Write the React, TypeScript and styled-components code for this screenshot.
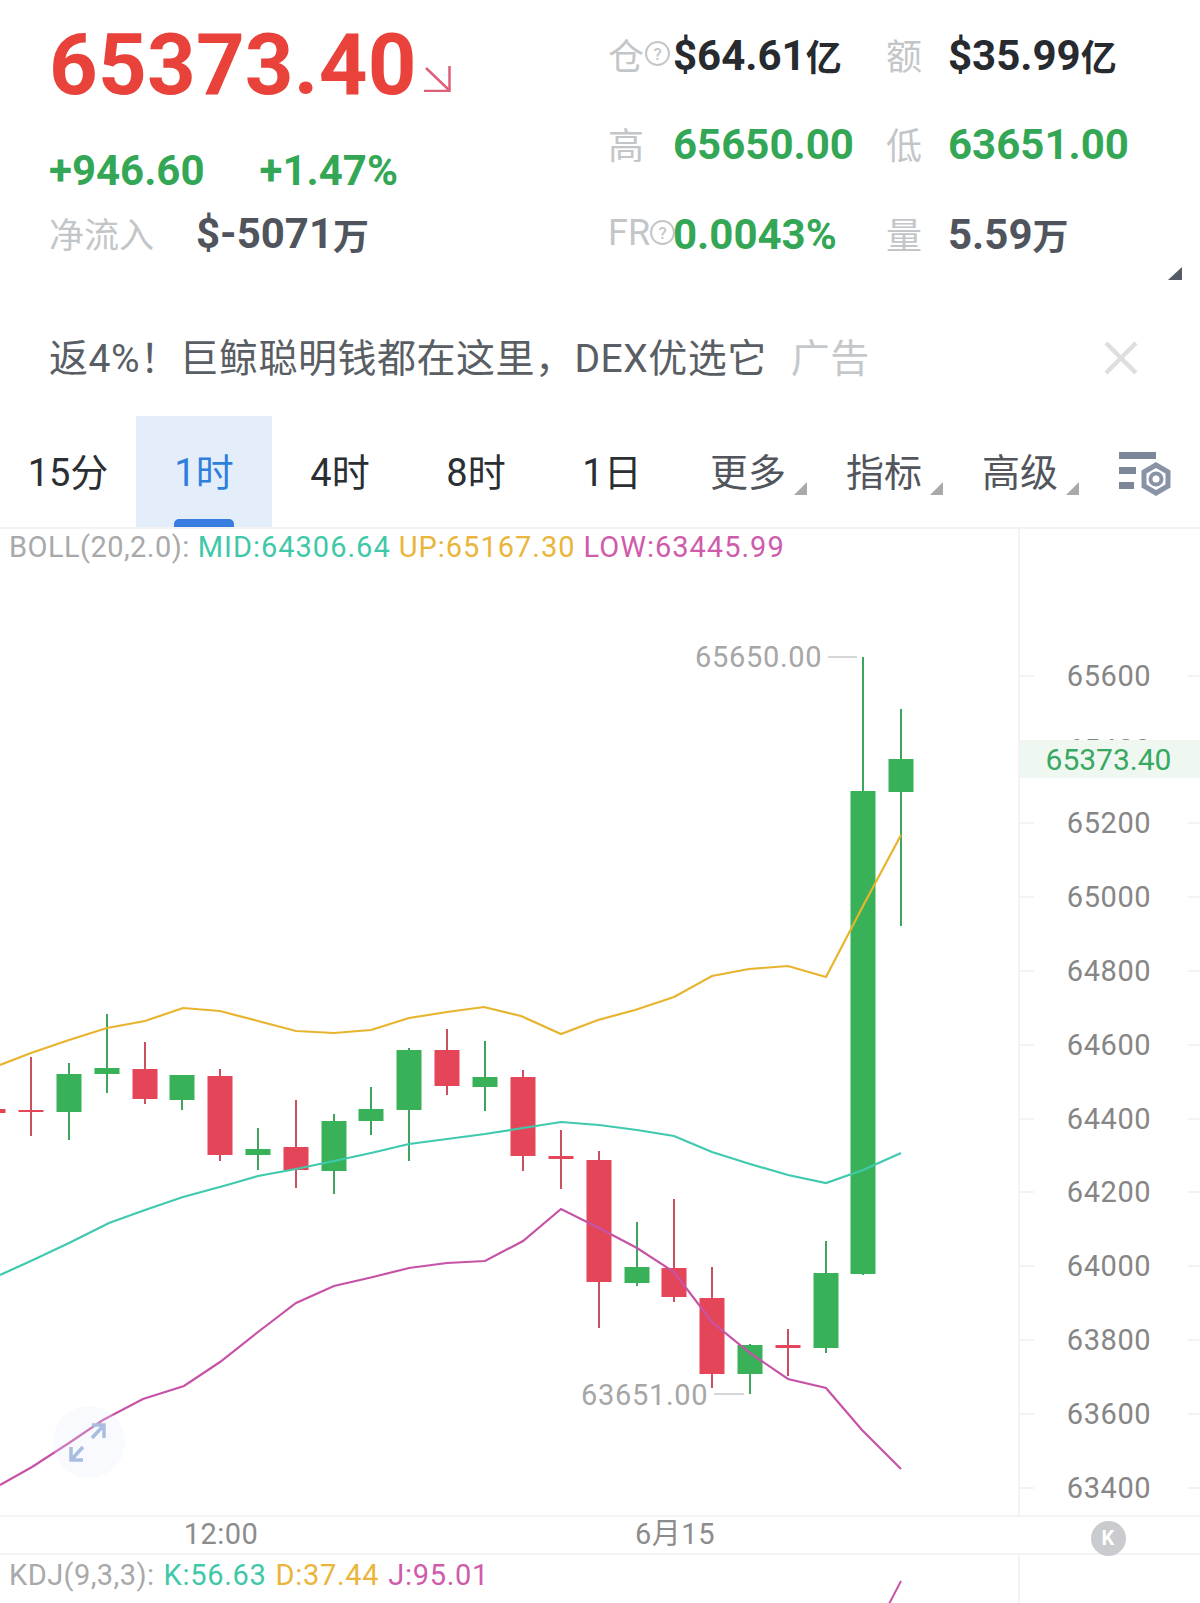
import React from 'react';
import styled, { createGlobalStyle } from 'styled-components';

const GlobalStyle = createGlobalStyle`
  html, body {
    margin: 0;
    padding: 0;
    background: #fff;
  }
  * {
    box-sizing: border-box;
  }
`;

const Page = styled.div`
  width: 1200px;
  height: 1603px;
  overflow: hidden;
  background: #fff;
  font-family: 'Roboto', 'Noto Sans CJK SC', sans-serif;
`;

const Summary = styled.div`
  display: grid;
  grid-template-columns: 608px 1fr;
  height: 310px;
  position: relative;
`;

const PriceColumn = styled.div`
  padding-left: 49px;
`;

const PriceRow = styled.div`
  display: flex;
  align-items: flex-end;
  height: 128px;
`;

const Price = styled.div`
  margin-bottom: -1px;
  font-size: 85px;
  line-height: 128px;
  font-weight: 700;
  color: #e8423a;
  letter-spacing: 0.2px;
`;

const PriceArrow = styled.svg`
  width: 27px;
  height: 26px;
  margin: 0 0 36px 7px;
`;

const ChangeRow = styled.div`
  display: flex;
  gap: 55px;
  height: 74px;
  padding-top: 14px;
  font-size: 42px;
  line-height: 58px;
  font-weight: 700;
  color: #33a755;
`;

const FlowRow = styled.div`
  display: flex;
  align-items: center;
  height: 60px;
`;

const FlowLabel = styled.span`
  width: 147px;
  font-size: 35px;
  color: #c3c6c9;
`;

const StatsGrid = styled.div`
  display: grid;
  grid-template-columns: 65px 213px 62px 1fr;
  grid-auto-rows: 89.5px;
  padding-top: 9px;
`;

const StatLabel = styled.div`
  display: flex;
  align-items: center;
  white-space: nowrap;
  font-size: 36px;
  color: #c3c6c9;
`;

const HelpDot = styled.span<{ $shift?: number }>`
  flex: none;
  display: inline-flex;
  align-items: center;
  justify-content: center;
  width: 25px;
  height: 25px;
  margin-left: ${(p) => p.$shift ?? 0}px;
  border: 2px solid #c3c6c9;
  border-radius: 50%;
  background: #fff;
  font-size: 17px;
  font-weight: 500;
  color: #c3c6c9;
`;

const StatValue = styled.div<{ $tone: 'green' | 'black' | 'slate' }>`
  display: flex;
  align-items: center;
  padding-top: 3px;
  white-space: nowrap;
  font-size: 42px;
  font-weight: 700;
  color: ${(p) => (p.$tone === 'green' ? '#33a755' : p.$tone === 'black' ? '#272a2e' : '#50545c')};
`;

const Unit = styled.span`
  font-size: 36px;
`;

const CornerMark = styled.span`
  position: absolute;
  left: 1168px;
  top: 267px;
  width: 14px;
  height: 13px;
  background: #555b65;
  clip-path: polygon(100% 0, 100% 100%, 0 100%);
`;

const AdRow = styled.div`
  display: flex;
  align-items: center;
  height: 106px;
  padding: 0 62px 16px 49px;
  font-size: 39px;
  letter-spacing: 0.5px;
  color: #595e64;
`;

const AdText = styled.span`
  white-space: nowrap;
`;

const AdTag = styled.span`
  margin-left: 24px;
  color: #c5c8cb;
`;

const AdClose = styled.svg`
  width: 34px;
  height: 34px;
  margin: 6px 0 0 auto;
`;

const TabBar = styled.div`
  display: grid;
  grid-template-columns: repeat(8, 136px) 1fr;
  height: 111px;
`;

const Tab = styled.div<{ $active?: boolean; $menu?: boolean }>`
  position: relative;
  display: flex;
  align-items: center;
  justify-content: center;
  padding-bottom: 5px;
  font-size: 38px;
  color: ${(p) => (p.$active ? '#2f7fdc' : p.$menu ? '#52565c' : '#2b2f33')};
  background: ${(p) => (p.$active ? '#e4eefb' : 'transparent')};

  ${(p) =>
    p.$active &&
    `&::before {
      content: '';
      position: absolute;
      left: 38px;
      bottom: 0;
      width: 60px;
      height: 8px;
      border-radius: 5px 5px 0 0;
      background: #3a7de0;
    }`}

  ${(p) =>
    p.$menu &&
    `&::after {
      content: '';
      position: absolute;
      left: 114px;
      top: 66px;
      width: 13px;
      height: 13px;
      background: #a9a9a9;
      clip-path: polygon(100% 0, 100% 100%, 0 100%);
    }`}
`;

const SettingsIcon = styled.svg`
  width: 56px;
  height: 48px;
  margin: 34px 0 0 29px;
`;

const ChartRow = styled.div`
  display: flex;
  height: 988px;
  border-top: 2px solid #f3f3f3;
`;

const Plot = styled.div`
  position: relative;
  flex: none;
  width: 1018px;
`;

const PlotSvg = styled.svg`
  display: block;
  position: absolute;
  left: 0;
  top: 0;
`;

const Legend = styled.div`
  position: absolute;
  left: 9px;
  top: -1px;
  display: flex;
  gap: 8px;
  white-space: nowrap;
  font-size: 29px;
  line-height: 38px;
  letter-spacing: 1px;
  font-weight: 400;
`;

const LegendItem = styled.span<{ $color: string }>`
  color: ${(p) => p.$color};
`;

const LegendName = styled.span`
  color: #a9a9a9;
  letter-spacing: 0.45px;
`;

const ExpandButton = styled.div`
  position: absolute;
  left: 53px;
  top: 877px;
  width: 72px;
  height: 72px;
  border-radius: 50%;
  display: flex;
  align-items: center;
  justify-content: center;
  background: rgba(226, 236, 250, 0.25);
`;

const Axis = styled.div`
  position: relative;
  flex: 1;
  padding-top: 110px;
  border-left: 2px solid #f3f3f3;
`;

const AxisRow = styled.div`
  display: flex;
  align-items: center;
  justify-content: space-between;
  height: 73.8px;
  font-size: 29px;
  letter-spacing: 0.6px;
  color: #868686;

  &::before,
  &::after {
    content: '';
    height: 2px;
    background: #f3f3f3;
  }
  &::before {
    width: 14px;
  }
  &::after {
    width: 12px;
    margin-left: 4px;
  }
`;

const PriceTag = styled.div`
  position: absolute;
  left: 0;
  right: 0;
  top: 211px;
  height: 38px;
  display: flex;
  align-items: center;
  justify-content: center;
  padding-right: 3px;
  background: #eff7f1;
  font-size: 30px;
  color: #38a862;
`;

const TimeAxis = styled.div`
  display: grid;
  grid-template-columns: 442px 466px 110px 182px;
  grid-template-rows: 36px;
  height: 40px;
  border-top: 2px solid #f3f3f3;
  border-bottom: 2px solid #f3f3f3;
  font-size: 29px;
  line-height: 1;
  letter-spacing: 0.5px;
  color: #8c8c8c;
`;

const TimeLabel = styled.div`
  display: flex;
  align-items: center;
  justify-content: center;
  padding-bottom: 2px;
`;

const Badge = styled.div`
  position: relative;
  grid-column: 4;
  display: flex;
  align-items: center;
  justify-content: center;
  padding-right: 2px;
`;

const BadgeCircle = styled.span`
  flex: none;
  display: flex;
  align-items: center;
  justify-content: center;
  width: 35px;
  height: 35px;
  margin-top: 6px;
  border-radius: 50%;
  background: #c9cbce;
  font-size: 20px;
  font-weight: 700;
  color: #fff;
`;

const SubChart = styled.div`
  display: flex;
  height: 48px;
`;

const SubPlot = styled(Plot)`
  border-right: 2px solid #f3f3f3;
  width: 1020px;
`;

const SubLegend = styled(Legend)`
  top: 0;
  gap: 9px;
  line-height: 40px;
  letter-spacing: 0.7px;
`;

type Candle = { x: number; high: number; low: number; top: number; bottom: number; up: boolean };

const c = (x: number, high: number, low: number, top: number, bottom: number, up: boolean): Candle => ({
  x,
  high,
  low,
  top,
  bottom,
  up,
});

const candles: Candle[] = [
  c(-7, 1111, 1111, 1109, 1113, false),
  c(31, 1057, 1136, 1110, 1112, false),
  c(69, 1063, 1140, 1074, 1112, true),
  c(107, 1014, 1093, 1068, 1074, true),
  c(145, 1042, 1104, 1069, 1099, false),
  c(182, 1075, 1110, 1075, 1100, true),
  c(220, 1069, 1161, 1076, 1155, false),
  c(258, 1128, 1170, 1149, 1155, true),
  c(296, 1100, 1188, 1147, 1170, false),
  c(334, 1114, 1194, 1121, 1171, true),
  c(371, 1087, 1135, 1109, 1121, true),
  c(409, 1048, 1161, 1050, 1110, true),
  c(447, 1029, 1095, 1050, 1086, false),
  c(485, 1041, 1111, 1077, 1087, true),
  c(523, 1070, 1171, 1077, 1156, false),
  c(561, 1130, 1189, 1156, 1159, false),
  c(599, 1151, 1328, 1160, 1282, false),
  c(637, 1222, 1286, 1267, 1283, true),
  c(674, 1199, 1302, 1268, 1297, false),
  c(712, 1267, 1388, 1298, 1374, false),
  c(750, 1344, 1394, 1345, 1374, true),
  c(788, 1329, 1376, 1345, 1348, false),
  c(826, 1241, 1353, 1273, 1348, true),
  c(863, 657, 1275, 791, 1274, true),
  c(901, 709, 926, 759, 792, true),
];

const upperBand =
  '0,1065 31,1053 69,1040 107,1028 145,1021 183,1008 220,1011 258,1021 296,1031 334,1033 371,1030 409,1018 447,1012 484,1007 521,1016 561,1034 598,1020 635,1010 674,997 712,976 749,969 788,966 826,977 863,906 901,835';
const midBand =
  '0,1275 33,1260 69,1243 109,1223 145,1210 183,1197 227,1185 258,1176 296,1169 334,1161 371,1153 409,1144 447,1139 485,1134 523,1128 561,1122 599,1125 637,1130 674,1136 712,1152 750,1164 788,1175 826,1183 863,1170 901,1153';
const lowerBand =
  '0,1485 32,1467 69,1443 103,1420 143,1399 184,1386 220,1362 258,1332 296,1303 334,1286 373,1277 409,1268 447,1263 485,1261 523,1241 561,1209 599,1228 637,1248 674,1272 712,1322 750,1353 788,1379 826,1388 862,1430 901,1469';

const axisPrices = [65600, 65400, 65200, 65000, 64800, 64600, 64400, 64200, 64000, 63800, 63600, 63400];

function CandleMark({ candle }: { candle: Candle }) {
  const body = candle.up ? '#38b159' : '#e54558';
  const wick = candle.up ? '#3fa45d' : '#c9505f';
  return (
    <g>
      <line x1={candle.x} x2={candle.x} y1={candle.high} y2={candle.low} stroke={wick} strokeWidth={2} />
      <rect x={candle.x - 12.5} y={candle.top} width={25} height={candle.bottom - candle.top} fill={body} />
    </g>
  );
}

export default function App() {
  return (
    <Page>
      <GlobalStyle />
      <Summary>
        <PriceColumn>
          <PriceRow>
            <Price>65373.40</Price>
            <PriceArrow viewBox="0 0 27 26" fill="none" stroke="#df5f78" strokeWidth={2.5}>
              <path d="M2 2 L25 24 M25.5 0 V25 H0" />
            </PriceArrow>
          </PriceRow>
          <ChangeRow>
            <span>+946.60</span>
            <span>+1.47%</span>
          </ChangeRow>
          <FlowRow>
            <FlowLabel>净流入</FlowLabel>
            <StatValue $tone="slate">
              $-5071<Unit>万</Unit>
            </StatValue>
          </FlowRow>
        </PriceColumn>
        <StatsGrid>
          <StatLabel>
            仓<HelpDot $shift={1}>?</HelpDot>
          </StatLabel>
          <StatValue $tone="black">
            $64.61<Unit>亿</Unit>
          </StatValue>
          <StatLabel>额</StatLabel>
          <StatValue $tone="black">
            $35.99<Unit>亿</Unit>
          </StatValue>
          <StatLabel>高</StatLabel>
          <StatValue $tone="green">65650.00</StatValue>
          <StatLabel>低</StatLabel>
          <StatValue $tone="green">63651.00</StatValue>
          <StatLabel>
            FR<HelpDot $shift={0}>?</HelpDot>
          </StatLabel>
          <StatValue $tone="green">0.0043%</StatValue>
          <StatLabel>量</StatLabel>
          <StatValue $tone="slate">
            5.59<Unit>万</Unit>
          </StatValue>
        </StatsGrid>
        <CornerMark />
      </Summary>

      <AdRow>
        <AdText>返4%！巨鲸聪明钱都在这里，DEX优选它</AdText>
        <AdTag>广告</AdTag>
        <AdClose viewBox="0 0 34 34" stroke="#dcdee0" strokeWidth={4.5}>
          <path d="M2 2 L32 32 M32 2 L2 32" />
        </AdClose>
      </AdRow>

      <TabBar>
        <Tab>15分</Tab>
        <Tab $active>1时</Tab>
        <Tab>4时</Tab>
        <Tab>8时</Tab>
        <Tab>1日</Tab>
        <Tab $menu>更多</Tab>
        <Tab $menu>指标</Tab>
        <Tab $menu>高级</Tab>
        <SettingsIcon viewBox="0 0 56 48" fill="none">
          <rect x="2" y="2" width="37" height="7" fill="#7d879a" />
          <rect x="2" y="17" width="17" height="7" fill="#7d879a" />
          <rect x="2" y="32" width="15" height="7" fill="#7d879a" />
          <path d="M39 15 L51 22 V36 L39 43 L27 36 V22 Z" stroke="#8a93a5" strokeWidth={5} fill="#fff" />
          <circle cx="39" cy="29" r="5.5" stroke="#8a93a5" strokeWidth={4} />
        </SettingsIcon>
      </TabBar>

      <ChartRow>
        <Plot>
          <PlotSvg width={1018} height={986} viewBox="0 529 1018 986" fontFamily="Roboto, sans-serif">
            {candles.map((candle) => (
              <CandleMark key={candle.x} candle={candle} />
            ))}
            <polyline points={upperBand} fill="none" stroke="#e8b42e" strokeWidth={2.2} />
            <polyline points={midBand} fill="none" stroke="#3fc9ad" strokeWidth={2.2} />
            <polyline points={lowerBand} fill="none" stroke="#c653a6" strokeWidth={2.2} />
            <text x={695} y={667} fontSize={29} fill="#a6a6a6" letterSpacing={0.7}>
              65650.00
            </text>
            <line x1={828} x2={857} y1={657} y2={657} stroke="#c8c8c8" strokeWidth={1.5} />
            <text x={581} y={1405} fontSize={29} fill="#a6a6a6" letterSpacing={0.7}>
              63651.00
            </text>
            <line x1={714} x2={744} y1={1394} y2={1394} stroke="#c8c8c8" strokeWidth={1.5} />
          </PlotSvg>
          <Legend>
            <LegendName>BOLL(20,2.0):</LegendName>
            <LegendItem $color="#3fc8a8">MID:64306.64</LegendItem>
            <LegendItem $color="#eab53b">UP:65167.30</LegendItem>
            <LegendItem $color="#cf5bab">LOW:63445.99</LegendItem>
          </Legend>
          <ExpandButton>
            <svg width="42" height="42" viewBox="0 0 42 42" fill="none" stroke="#a9bde0" strokeWidth={3.5}>
              <path d="M24 17 L36 4 M24 4 H36 V17" />
              <path d="M15 26 L3 39 M3 26 V39 H15" />
            </svg>
          </ExpandButton>
        </Plot>
        <Axis>
          {axisPrices.map((price) => (
            <AxisRow key={price}>{price}</AxisRow>
          ))}
          <PriceTag>65373.40</PriceTag>
        </Axis>
      </ChartRow>

      <TimeAxis>
        <TimeLabel>12:00</TimeLabel>
        <TimeLabel>6月15</TimeLabel>
        <Badge>
          <BadgeCircle>K</BadgeCircle>
        </Badge>
      </TimeAxis>

      <SubChart>
        <SubPlot>
          <PlotSvg width={1018} height={48} viewBox="0 1555 1018 48">
            <line x1={889} y1={1604} x2={901} y2={1581} stroke="#c653a6" strokeWidth={2} />
          </PlotSvg>
          <SubLegend>
            <LegendName>KDJ(9,3,3):</LegendName>
            <LegendItem $color="#3fc8a8">K:56.63</LegendItem>
            <LegendItem $color="#eab53b">D:37.44</LegendItem>
            <LegendItem $color="#cf5bab">J:95.01</LegendItem>
          </SubLegend>
        </SubPlot>
      </SubChart>
    </Page>
  );
}
